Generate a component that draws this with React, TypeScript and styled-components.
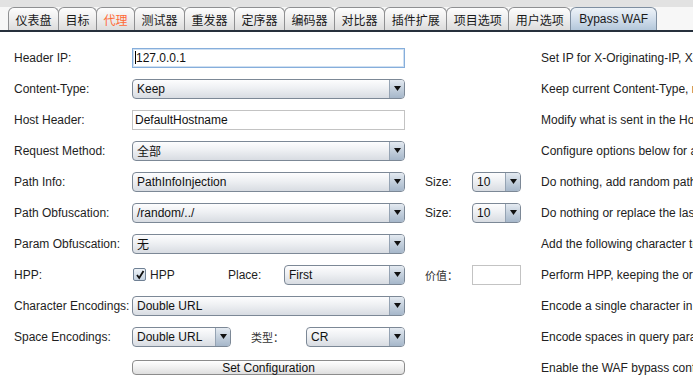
import styled, { createGlobalStyle } from "styled-components";

const GlobalStyle = createGlobalStyle`
  html, body {
    margin: 0;
    padding: 0;
    background: #ffffff;
    overflow: hidden;
  }
  body {
    font-family: "Liberation Sans", Arial, "Noto Sans CJK SC", sans-serif;
    font-size: 12px;
    color: #1e1e1e;
  }
`

const Page = styled.div`
  width: 693px;
  height: 389px;
  overflow: hidden;
  background: #ffffff;
`

const TabBar = styled.div`
  display: flex;
  align-items: flex-end;
  height: 30px;
  padding-left: 8px;
  background: linear-gradient(to bottom, #e2e2e2 0px, #e2e2e2 7px, #f7f7f7 7px, #f7f7f7 100%);
  border-bottom: 2px solid #26303c;
`

const Tab = styled.div<{ $active?: boolean; $accent?: boolean }>`
  height: 22px;
  padding: 0 ${p => (p.$active ? 8 : 6.5)}px;
  margin-right: -1px;
  display: flex;
  align-items: center;
  border: 1px solid ${p => (p.$active ? "#7f8fa1" : "#8f9092")};
  border-bottom: none;
  border-radius: 6px 6px 0 0;
  background: ${p =>
    p.$active
      ? "linear-gradient(to bottom, #eef3f8, #cfdcea 55%, #b3c7da)"
      : "linear-gradient(to bottom, #fdfdfd, #ececec 55%, #dcdcdc)"};
  color: ${p => (p.$accent ? "#ff6a36" : "#1a1a1a")};
  font-family: "Liberation Sans", Arial, "Noto Sans CJK SC", sans-serif;
  font-size: 12px;
  white-space: nowrap;
  z-index: ${p => (p.$active ? 2 : 1)};
`

const Form = styled.div`
  padding: 10px 0 0 14px;
`

const Row = styled.div`
  display: flex;
  align-items: center;
  height: 31px;
  white-space: nowrap;
`

const Label = styled.div`
  width: 118px;
  flex: none;
`

const Control = styled.div<{ $cols?: string }>`
  width: 273px;
  flex: none;
  display: grid;
  grid-template-columns: ${p => p.$cols || "1fr"};
  align-items: center;
`

const Extra = styled.div`
  width: 136px;
  flex: none;
  display: flex;
  align-items: center;
  padding-left: 20px;
  box-sizing: border-box;
`

const ExtraLabel = styled.div`
  width: 47px;
  flex: none;
`

const CjkLabel = styled.span<{ $pad?: number }>`
  font-family: "Noto Sans CJK SC", sans-serif;
  font-size: 11px;
  color: #333;
  padding-left: ${p => p.$pad || 0}px;
`

const Desc = styled.div`
  color: #222;
`

const TextField = styled.div<{ $focused?: boolean; $w?: number }>`
  height: 20px;
  width: ${p => (p.$w ? `${p.$w}px` : "auto")};
  box-sizing: border-box;
  background: #fff;
  border: 1px solid ${p => (p.$focused ? "#86aedb" : "#c3c3c3")};
  box-shadow: ${p => (p.$focused ? "inset 0 0 0 1px #cfe0f2" : "none")};
  display: flex;
  align-items: center;
  padding-left: 2px;
  color: #111;
`

const Caret = styled.span`
  display: inline-block;
  width: 1px;
  height: 13px;
  background: #000;
`

const SelectBox = styled.div<{ $w?: number }>`
  height: 20px;
  width: ${p => (p.$w ? `${p.$w}px` : "auto")};
  box-sizing: border-box;
  border: 1px solid #7c8896;
  border-radius: 4px;
  background: linear-gradient(to bottom, #fdfdfe, #eef0f3 45%, #d8dce2);
  display: flex;
  align-items: stretch;
  overflow: hidden;
`

const SelectText = styled.div`
  flex: 1;
  display: flex;
  align-items: center;
  padding-left: 4px;
  color: #111;
  font-family: "Liberation Sans", Arial, "Noto Sans CJK SC", sans-serif;
`

const ArrowPart = styled.div`
  width: 14px;
  flex: none;
  border-left: 1px solid #95a3b3;
  background: linear-gradient(to bottom, #e4eaf1, #c3cfdc 50%, #a6b7ca);
  display: flex;
  align-items: center;
  justify-content: center;
`

const CheckWrap = styled.label`
  display: flex;
  align-items: center;
  gap: 4px;
  padding-left: 1px;
`

const CheckBox = styled.span`
  width: 13px;
  height: 13px;
  box-sizing: border-box;
  border: 1px solid #6f8094;
  border-radius: 2px;
  background: linear-gradient(to bottom, #eef3f8, #c4d2e1);
  display: flex;
  align-items: center;
  justify-content: center;
`

const Button = styled.div`
  height: 15px;
  box-sizing: border-box;
  border: 1px solid #8c8c8c;
  border-radius: 4px;
  background: linear-gradient(to bottom, #ffffff, #f0f0f0 50%, #dedede);
  display: flex;
  align-items: center;
  justify-content: center;
  color: #111;
`

function Select({ value, w }: { value: string; w?: number }) {
  return (
    <SelectBox $w={w}>
      <SelectText>{value}</SelectText>
      <ArrowPart>
        <svg width="7" height="5" viewBox="0 0 7 5">
          <path d="M0 0 H7 L3.5 5 Z" fill="#111" />
        </svg>
      </ArrowPart>
    </SelectBox>
  );
}

const tabs = ["仪表盘", "目标", "代理", "测试器", "重发器", "定序器", "编码器", "对比器", "插件扩展", "项目选项", "用户选项"];

export default function App() {
  return (
    <Page>
      <GlobalStyle />
      <TabBar>
        {tabs.map(t => (
          <Tab key={t} $accent={t === "代理"}>{t}</Tab>
        ))}
        <Tab $active>Bypass WAF</Tab>
      </TabBar>
      <Form>
        <Row>
          <Label>Header IP:</Label>
          <Control>
            <TextField $focused><Caret />127.0.0.1</TextField>
          </Control>
          <Extra />
          <Desc>Set IP for X-Originating-IP, X-Forwarded-For, X-Remote-IP, X-Remote-Addr headers.</Desc>
        </Row>
        <Row>
          <Label>Content-Type:</Label>
          <Control><Select value="Keep" /></Control>
          <Extra />
          <Desc>Keep current Content-Type, remove it, or replace with one of the options.</Desc>
        </Row>
        <Row>
          <Label>Host Header:</Label>
          <Control><TextField>DefaultHostname</TextField></Control>
          <Extra />
          <Desc>Modify what is sent in the Host header.</Desc>
        </Row>
        <Row>
          <Label>Request Method:</Label>
          <Control><Select value="全部" /></Control>
          <Extra />
          <Desc>Configure options below for all request methods.</Desc>
        </Row>
        <Row>
          <Label>Path Info:</Label>
          <Control><Select value="PathInfoInjection" /></Control>
          <Extra>
            <ExtraLabel>Size:</ExtraLabel>
            <Select value="10" w={49} />
          </Extra>
          <Desc>Do nothing, add random path info at the end of the URL.</Desc>
        </Row>
        <Row>
          <Label>Path Obfuscation:</Label>
          <Control><Select value="/random/../" /></Control>
          <Extra>
            <ExtraLabel>Size:</ExtraLabel>
            <Select value="10" w={49} />
          </Extra>
          <Desc>Do nothing or replace the last / in the request.</Desc>
        </Row>
        <Row>
          <Label>Param Obfuscation:</Label>
          <Control><Select value="无" /></Control>
          <Extra />
          <Desc>Add the following character to the last parameter.</Desc>
        </Row>
        <Row>
          <Label>HPP:</Label>
          <Control $cols="96px 56px 1fr">
            <CheckWrap>
              <CheckBox>
                <svg width="10" height="10" viewBox="0 0 10 10">
                  <path d="M2 5 L4.2 8 L8.5 1" stroke="#111" strokeWidth="1.8" fill="none" />
                </svg>
              </CheckBox>
              HPP
            </CheckWrap>
            <span>Place:</span>
            <Select value="First" />
          </Control>
          <Extra>
            <ExtraLabel><CjkLabel>价值：</CjkLabel></ExtraLabel>
            <TextField $w={49} />
          </Extra>
          <Desc>Perform HPP, keeping the original parameter value.</Desc>
        </Row>
        <Row>
          <Label>Character Encodings:</Label>
          <Control><Select value="Double URL" /></Control>
          <Extra />
          <Desc>Encode a single character in the payload.</Desc>
        </Row>
        <Row>
          <Label>Space Encodings:</Label>
          <Control $cols="99px 1fr 99px">
            <Select value="Double URL" />
            <CjkLabel $pad={20}>类型：</CjkLabel>
            <Select value="CR" />
          </Control>
          <Extra />
          <Desc>Encode spaces in query parameters.</Desc>
        </Row>
        <Row>
          <Label />
          <Control><Button>Set Configuration</Button></Control>
          <Extra />
          <Desc>Enable the WAF bypass configuration.</Desc>
        </Row>
      </Form>
    </Page>
  );
}
